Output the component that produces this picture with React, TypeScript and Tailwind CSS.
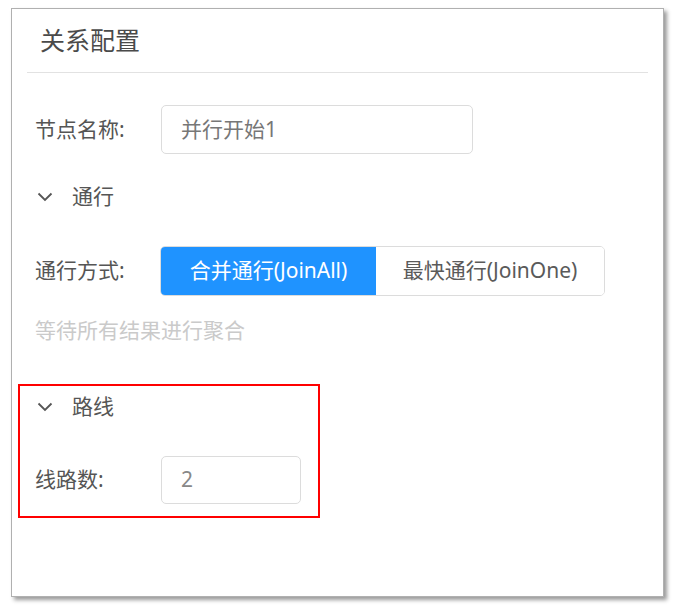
import React from "react";

const font = { fontFamily: '"Noto Sans", "Noto Sans CJK SC", sans-serif' };

function Chevron() {
  return (
    <svg width="16" height="10" viewBox="0 0 16 10" className="ml-[2px]">
      <path d="M1.5 1.5 L8 8 L14.5 1.5" fill="none" stroke="#555" strokeWidth="1.8" />
    </svg>
  );
}

function SectionHeader({ title }: { title: string }) {
  return (
    <div className="flex h-[42px] items-center">
      <Chevron />
      <span className="ml-[19px] text-[21px] text-[#555]">{title}</span>
    </div>
  );
}

export default function App() {
  return (
    <div className="min-h-[612px] w-[675px] bg-white pl-[11px] pt-[8px]" style={font}>
      <div className="flex h-[589px] w-[653px] flex-col border border-[#b0b0b0] bg-white shadow-[3px_3px_4px_rgba(0,0,0,0.4)]">
        <div className="flex h-[63px] items-center pl-[28px] text-[25px] text-[#4a4a4a]">关系配置</div>
        <div className="mx-[15px] h-px bg-[#e2e2e2]" />
        <div className="pl-[23px]">
          <div className="mt-[32px] flex h-[49px] items-center">
            <div className="w-[126px] text-[21px] text-[#555]">节点名称:</div>
            <div className="flex h-[49px] w-[312px] items-center rounded-[5px] border border-[#dcdcdc] px-[19px] text-[21px] text-[#777]">
              并行开始1
            </div>
          </div>
          <div className="mt-[22px]">
            <SectionHeader title="通行" />
          </div>
          <div className="mt-[28px] flex h-[50px] items-center">
            <div className="w-[125px] text-[21px] text-[#555]">通行方式:</div>
            <div className="flex h-[50px] overflow-hidden rounded-[5px] border border-[#dcdcdc]">
              <div className="flex w-[215px] items-center justify-center bg-[#1f93ff] text-[21px] text-white">
                合并通行(JoinAll)
              </div>
              <div className="flex w-[228px] items-center justify-center bg-white text-[21px] text-[#5a5a5a]">
                最快通行(JoinOne)
              </div>
            </div>
          </div>
          <div className="mt-[20px] h-[28px] text-[21px] leading-[28px] text-[#cacaca]">等待所有结果进行聚合</div>
          <div className="-ml-[17px] mt-[40px] w-[302px] border-2 border-[#ff0000] pb-[12px] pl-[15px]">
            <SectionHeader title="路线" />
            <div className="mt-[28px] flex h-[48px] items-center">
              <div className="w-[126px] text-[21px] text-[#555]">线路数:</div>
              <div className="flex h-[48px] w-[140px] items-center rounded-[5px] border border-[#dcdcdc] px-[19px] text-[21px] text-[#888]">
                2
              </div>
            </div>
          </div>
        </div>
      </div>
    </div>
  );
}
